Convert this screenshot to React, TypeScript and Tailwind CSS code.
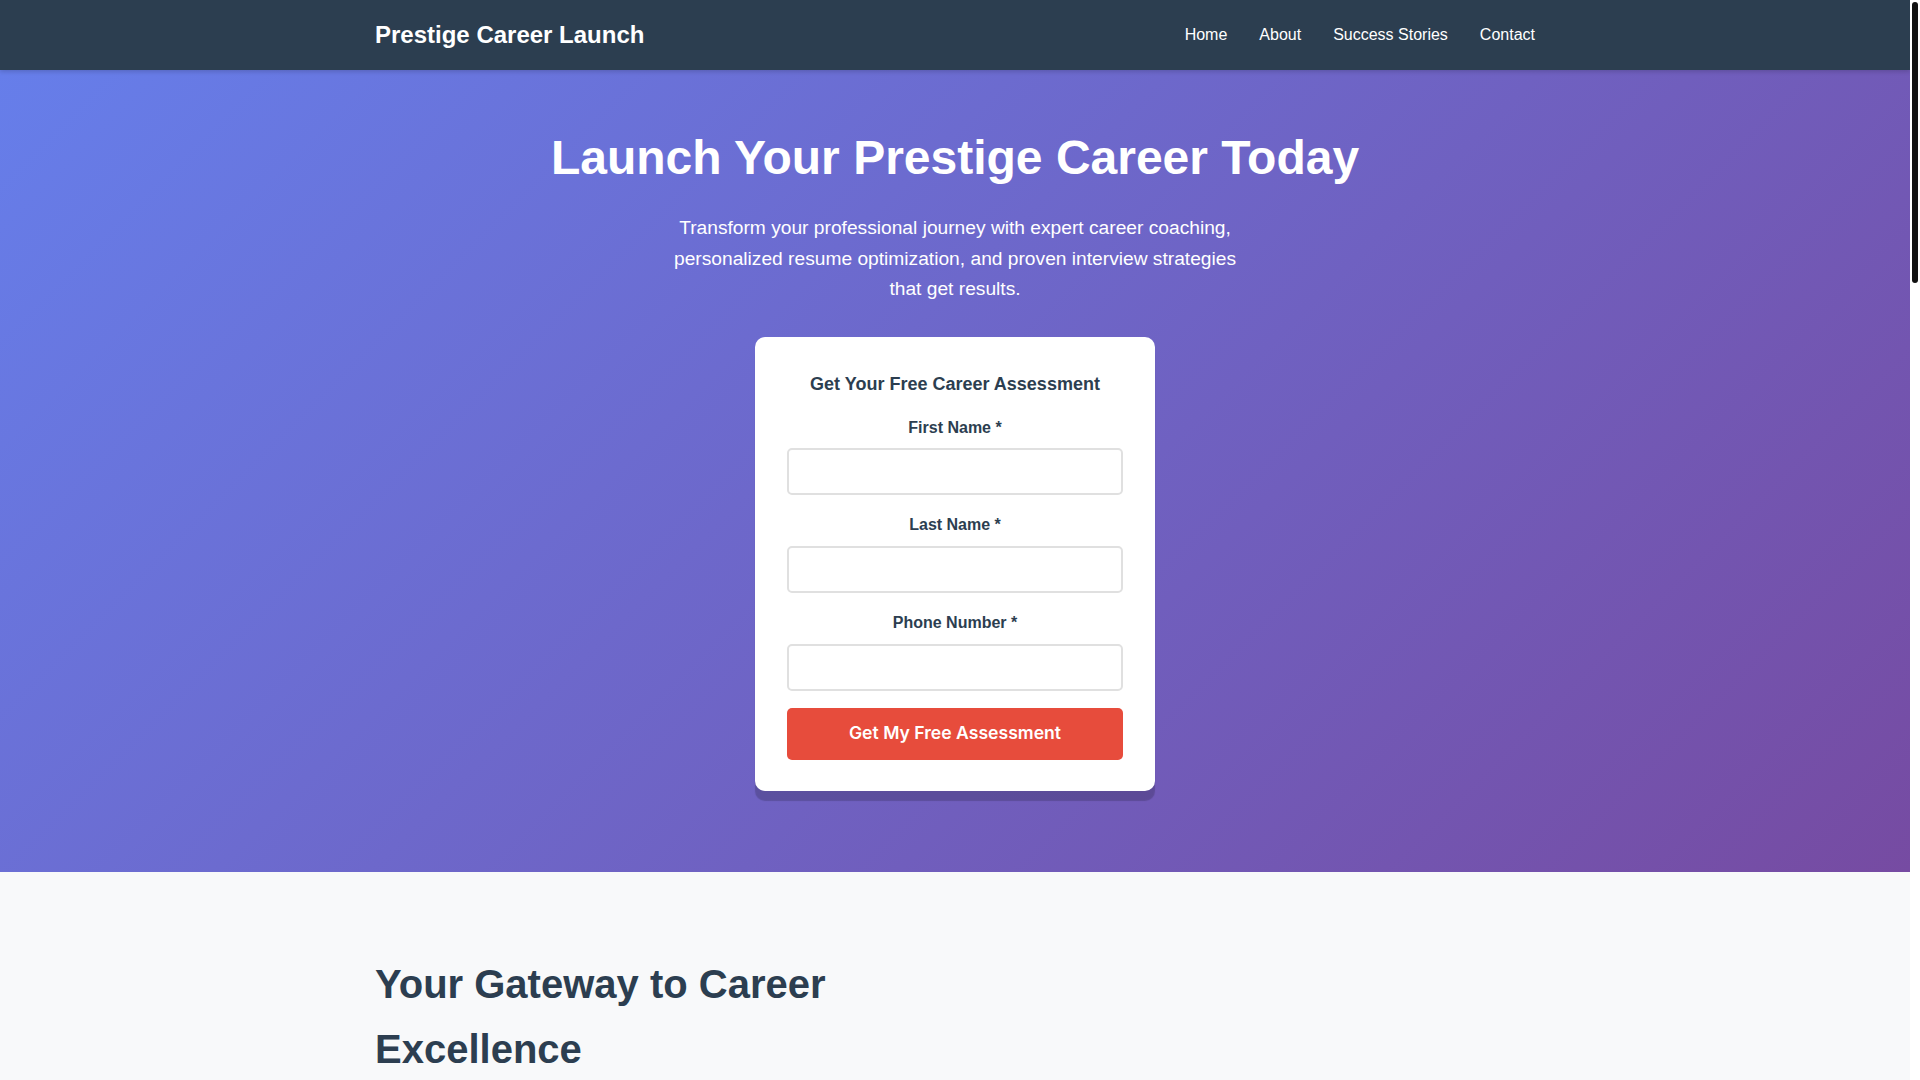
import { useState } from "react";

const navLinks = ["Home", "About", "Success Stories", "Contact"];

const services = [
  {
    title: "Career Coaching",
    text: "One-on-one sessions with certified coaches who help you define clear goals and build a roadmap to reach them.",
  },
  {
    title: "Resume Optimization",
    text: "ATS-friendly resumes and cover letters written to highlight your strongest achievements and land interviews.",
  },
  {
    title: "Interview Preparation",
    text: "Mock interviews, feedback and proven answer frameworks so you walk into every interview with confidence.",
  },
  {
    title: "LinkedIn Branding",
    text: "A polished profile that attracts recruiters and positions you as a leader in your field.",
  },
  {
    title: "Salary Negotiation",
    text: "Data-backed strategies to secure the compensation package you deserve.",
  },
  {
    title: "Executive Placement",
    text: "Access to our network of hiring partners across finance, technology and consulting.",
  },
];

const stories = [
  { name: "Sarah M.", role: "Senior Analyst, Goldman Sachs", quote: "Within six weeks I had three offers on the table. The interview prep was a game changer." },
  { name: "David L.", role: "Product Manager, Google", quote: "My resume finally told the right story. Recruiters started reaching out to me." },
  { name: "Priya K.", role: "Consultant, McKinsey", quote: "The coaching sessions gave me clarity and the confidence to aim higher." },
];

function FormField({ label, type = "text" }: { label: string; type?: string }) {
  const [value, setValue] = useState("");
  return (
    <div className="mb-[17px]">
      <label className="block text-center text-[16px] leading-[25.6px] font-semibold text-[#2c3e50] mb-2">
        {label} *
      </label>
      <input
        type={type}
        value={value}
        onChange={(e) => setValue(e.target.value)}
        className="block w-full h-[47px] px-3 border-2 border-[#e0e0e0] rounded-[5px] bg-white text-[16px] outline-none focus:border-[#667eea]"
      />
    </div>
  );
}

export default function App() {
  return (
    <div className="w-[1910px] font-['Liberation_Sans',Arial,sans-serif] text-[#333] leading-[1.6] bg-[#f8f9fa]">
      {/* header */}
      <header className="bg-[#2c3e50] shadow-[0_2px_4px_rgba(0,0,0,0.15)] relative z-10">
        <div className="max-w-[1200px] mx-auto px-5 h-[70px] flex items-center justify-between">
          <div className="text-[24px] font-bold text-white">Prestige Career Launch</div>
          <nav className="flex gap-8">
            {navLinks.map((l) => (
              <a key={l} href="#" className="text-[16px] text-white">
                {l}
              </a>
            ))}
          </nav>
        </div>
      </header>

      {/* hero */}
      <section className="bg-[linear-gradient(135deg,#667eea_0%,#764ba2_100%)] pt-[50px] pb-[81px] text-white text-center">
        <div className="max-w-[1200px] mx-auto px-5">
          <h1 className="text-[48px] font-bold leading-[1.6] mb-4">Launch Your Prestige Career Today</h1>
          <p className="text-[19.2px] leading-[30.72px] max-w-[580px] mx-auto mb-8">
            Transform your professional journey with expert career coaching, personalized resume optimization, and
            proven interview strategies that get results.
          </p>

          <form
            onSubmit={(e) => e.preventDefault()}
            className="w-[400px] mx-auto bg-white rounded-[10px] px-8 pt-[33px] pb-[31px] shadow-[0_10px_1px_rgba(0,0,0,0.18)]"
          >
            <h3 className="text-[18px] leading-[28.8px] font-bold text-[#2c3e50] mb-4">
              Get Your Free Career Assessment
            </h3>
            <FormField label="First Name" />
            <FormField label="Last Name" />
            <FormField label="Phone Number" type="tel" />
            <button
              type="submit"
              className="w-full h-[52px] bg-[#e74c3c] text-white rounded-[5px] font-['Inter',sans-serif] font-semibold text-[17.6px]"
            >
              Get My Free Assessment
            </button>
          </form>
        </div>
      </section>

      {/* gateway */}
      <section className="pt-20 pb-20">
        <div className="max-w-[1200px] mx-auto px-5 grid grid-cols-2 gap-16 items-center">
          <div>
            <h2 className="text-[40px] font-bold leading-[65px] text-[#2c3e50] mb-6">
              Your Gateway to Career Excellence
            </h2>
            <p className="text-[18px] leading-[28.8px] text-[#555] mb-4">
              At Prestige Career Launch, we believe every professional deserves a career that reflects their true
              potential. Our team of industry experts has helped thousands of candidates secure roles at top firms.
            </p>
            <p className="text-[18px] leading-[28.8px] text-[#555] mb-4">
              We combine personalized coaching with data-driven insights to position you ahead of the competition,
              whether you are a recent graduate or a seasoned executive.
            </p>
            <p className="text-[18px] leading-[28.8px] text-[#555] mb-6">
              From your first consultation to your first day on the job, we are with you every step of the way.
            </p>
            <ul className="flex flex-col gap-3 text-[17px] text-[#2c3e50]">
              <li>✓ 95% client placement rate</li>
              <li>✓ Average salary increase of 32%</li>
              <li>✓ Coaches from Fortune 500 companies</li>
              <li>✓ Flexible online and in-person sessions</li>
            </ul>
          </div>
          <div className="bg-white rounded-[10px] p-10 shadow-[0_5px_20px_rgba(0,0,0,0.08)] grid grid-cols-2 gap-8 text-center">
            {[
              ["5,000+", "Careers Launched"],
              ["95%", "Placement Rate"],
              ["200+", "Hiring Partners"],
              ["15", "Years Experience"],
            ].map(([n, t]) => (
              <div key={t}>
                <div className="text-[36px] font-bold text-[#667eea]">{n}</div>
                <div className="text-[15px] text-[#555]">{t}</div>
              </div>
            ))}
          </div>
        </div>
      </section>

      {/* services */}
      <section className="py-20 bg-white">
        <div className="max-w-[1200px] mx-auto px-5">
          <h2 className="text-[40px] font-bold text-center text-[#2c3e50] mb-12">Our Services</h2>
          <div className="grid grid-cols-3 gap-8">
            {services.map((s) => (
              <div key={s.title} className="bg-[#f8f9fa] rounded-[10px] p-8 min-h-[260px]">
                <h3 className="text-[22px] font-bold text-[#2c3e50] mb-3">{s.title}</h3>
                <p className="text-[16px] text-[#555]">{s.text}</p>
              </div>
            ))}
          </div>
        </div>
      </section>

      {/* stories */}
      <section className="py-20">
        <div className="max-w-[1200px] mx-auto px-5">
          <h2 className="text-[40px] font-bold text-center text-[#2c3e50] mb-12">Success Stories</h2>
          <div className="grid grid-cols-3 gap-8">
            {stories.map((s) => (
              <div key={s.name} className="bg-white rounded-[10px] p-8 min-h-[300px] shadow-[0_5px_20px_rgba(0,0,0,0.08)]">
                <p className="text-[17px] italic text-[#555] mb-6">"{s.quote}"</p>
                <div className="font-bold text-[#2c3e50]">{s.name}</div>
                <div className="text-[14px] text-[#777]">{s.role}</div>
              </div>
            ))}
          </div>
        </div>
      </section>

      {/* cta */}
      <section className="py-24 bg-[linear-gradient(135deg,#667eea_0%,#764ba2_100%)] text-white text-center">
        <h2 className="text-[40px] font-bold mb-4">Ready to Launch Your Career?</h2>
        <p className="text-[18px] mb-8">Book your free assessment today and take the first step.</p>
        <button className="bg-[#e74c3c] text-white rounded-[5px] px-10 h-[52px] font-['Inter',sans-serif] font-semibold text-[17.6px]">
          Get Started
        </button>
      </section>

      {/* footer */}
      <footer className="bg-[#2c3e50] text-white pt-16 pb-10 min-h-[520px]">
        <div className="max-w-[1200px] mx-auto px-5 grid grid-cols-3 gap-12">
          <div>
            <div className="text-[22px] font-bold mb-3">Prestige Career Launch</div>
            <p className="text-[15px] text-[#bdc3c7]">Helping ambitious professionals reach the careers they deserve.</p>
          </div>
          <div>
            <div className="text-[18px] font-bold mb-3">Quick Links</div>
            <ul className="text-[15px] text-[#bdc3c7] flex flex-col gap-2">
              {navLinks.map((l) => (
                <li key={l}>{l}</li>
              ))}
            </ul>
          </div>
          <div>
            <div className="text-[18px] font-bold mb-3">Contact</div>
            <p className="text-[15px] text-[#bdc3c7]">info@prestigecareerlaunch.com</p>
            <p className="text-[15px] text-[#bdc3c7]">(555) 123-4567</p>
          </div>
        </div>
        <div className="max-w-[1200px] mx-auto px-5 mt-16 pt-6 border-t border-[#3d5166] text-center text-[14px] text-[#95a5a6]">
          © 2024 Prestige Career Launch. All rights reserved.
        </div>
      </footer>

      {/* page scrollbar as seen in the capture */}
      <div className="fixed top-0 right-0 w-[10px] h-screen bg-white z-20">
        <div className="absolute top-[2px] left-[2px] w-[6px] h-[281px] rounded-full bg-[#111]" />
      </div>
    </div>
  );
}
